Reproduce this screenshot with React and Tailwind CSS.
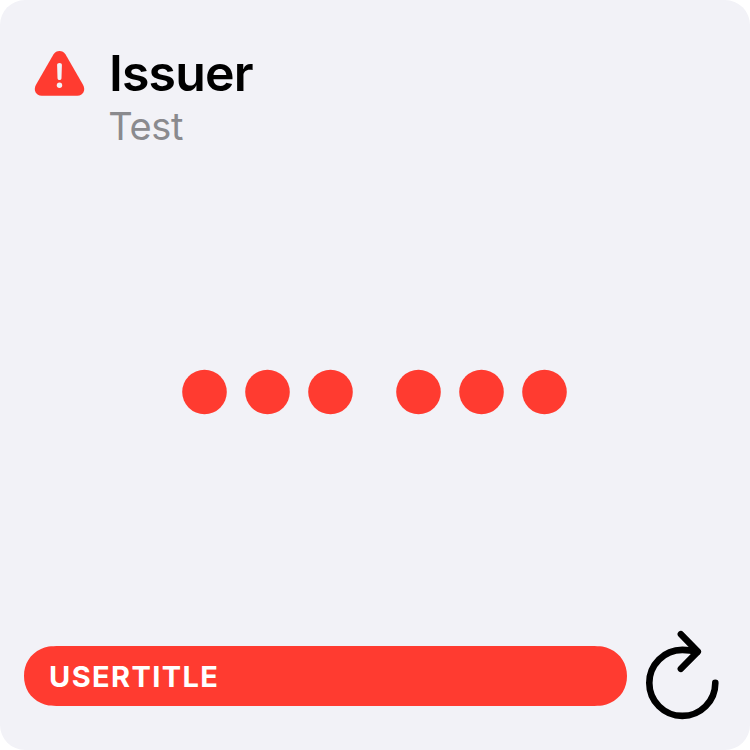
function WarningIcon() {
  return (
    <svg className="block h-[60px] w-[60px] shrink-0" viewBox="30 45 60 60" aria-hidden="true">
      <path
        fill="#ff3b30"
        d="M53.4 54.4 C56.2 49.9 62.8 49.9 65.6 54.4 L83 84.8 C86 90.1 83.2 95.7 77.3 95.7 H41.7 C35.8 95.7 33 90.1 36 84.8 Z"
      />
      <path
        fill="#f2f2f7"
        d="M57.1 65.1 C57 63.7 58 62.9 59.5 62.9 C61 62.9 62 63.7 61.9 65.1 L61.5 78 C61.4 79.4 60.7 80.1 59.5 80.1 C58.3 80.1 57.6 79.4 57.5 78 Z"
      />
      <circle cx="59.5" cy="85.3" r="2.7" fill="#f2f2f7" />
    </svg>
  );
}

function RefreshIcon() {
  return (
    <svg
      className="block h-[100px] w-[85px] shrink-0"
      viewBox="640 625 85 100"
      fill="none"
      stroke="#000"
      strokeWidth="6.6"
      strokeLinecap="round"
      strokeLinejoin="round"
      aria-hidden="true"
    >
      <path d="M715.3 682.9 A33 33 0 1 1 682.3 649.9 Q690 649.9 697.3 651.7" />
      <path d="M680.9 634.2 L697.8 651.6 L680.9 668.8" />
    </svg>
  );
}

function DotGroup() {
  return (
    <svg className="block h-[46px] w-[172px]" viewBox="0 0 172 46" fill="#ff3b30" aria-hidden="true">
      <circle cx="23.5" cy="23" r="22.3" />
      <circle cx="86.5" cy="23" r="22.3" />
      <circle cx="149.5" cy="23" r="22.3" />
    </svg>
  );
}

export default function App() {
  return (
    <div className="h-[750px] w-[750px] bg-white font-['Inter',sans-serif]">
      <main className="flex h-full flex-col overflow-hidden rounded-[25px] bg-[#f2f2f7]">
        <header className="flex h-[160px] shrink-0 pl-[30px] pt-[45px]">
          <WarningIcon />
          <div className="pl-[19px]">
            <h1 className="text-[50px] font-semibold leading-[56px] tracking-[-0.85px] text-black">Issuer</h1>
            <p className="-ml-px pl-[0.2px] text-[38px] leading-[50px] tracking-[-0.3px] text-[#8a8a8e]">Test</p>
          </div>
        </header>
        <section className="flex h-[465px] shrink-0 gap-[42px] pl-[181px] pt-[209px]">
          <DotGroup />
          <DotGroup />
        </section>
        <footer className="flex h-[125px] shrink-0 items-start pl-6">
          <div className="relative mt-[21px] flex h-[60px] w-[603px] shrink-0 items-center">
            <svg className="absolute inset-0 h-full w-full" viewBox="0 0 603 60" aria-hidden="true">
              <path
                fill="#ff3b30"
                d="M36 0 H567 C577 0 581 .6 586 3 C597 8 603 18 603 30 C603 42 597 52 586 57 C581 59.4 577 60 567 60 H36 C26 60 22 59.4 17 57 C6 52 0 42 0 30 C0 18 6 8 17 3 C22 .6 26 0 36 0 Z"
              />
            </svg>
            <span className="relative pl-[25px] text-[29px] font-bold leading-none tracking-[1.4px] text-white">
              USERTITLE
            </span>
          </div>
          <button type="button" aria-label="Refresh" className="ml-[13px]">
            <RefreshIcon />
          </button>
        </footer>
      </main>
    </div>
  );
}
